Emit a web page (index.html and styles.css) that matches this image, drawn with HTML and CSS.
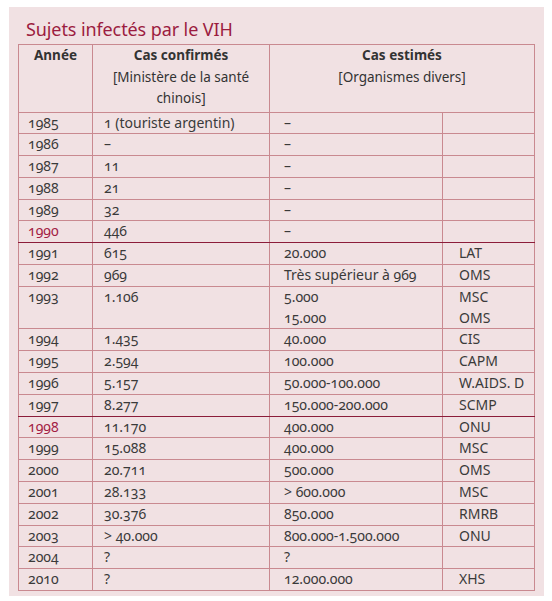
FILE: index.html
```html
<!DOCTYPE html>
<html lang="fr">
<head>
<meta charset="utf-8">
<title>Sujets infectés par le VIH</title>
<link rel="stylesheet" href="styles.css">
</head>
<body>
<div class="panel">
  <h1 class="title">Sujets infectés par le VIH</h1>
  <table class="data">
    <colgroup>
      <col class="c-year">
      <col class="c-conf">
      <col class="c-est">
      <col class="c-src">
    </colgroup>
    <thead>
      <tr>
        <th class="h-year">Année</th>
        <th class="h-conf">Cas confirmés<br><span class="sub">[Ministère de la santé<br>chinois]</span></th>
        <th class="h-est" colspan="2">Cas estimés<br><span class="sub">[Organismes divers]</span></th>
      </tr>
    </thead>
    <tbody>
      <tr><td class="year">1985</td><td class="conf">1 (touriste argentin)</td><td class="est">–</td><td class="src"></td></tr>
      <tr><td class="year">1986</td><td class="conf">–</td><td class="est">–</td><td class="src"></td></tr>
      <tr><td class="year">1987</td><td class="conf">11</td><td class="est">–</td><td class="src"></td></tr>
      <tr><td class="year">1988</td><td class="conf">21</td><td class="est">–</td><td class="src"></td></tr>
      <tr><td class="year">1989</td><td class="conf">32</td><td class="est">–</td><td class="src"></td></tr>
      <tr class="mark"><td class="year hl">1990</td><td class="conf">446</td><td class="est">–</td><td class="src"></td></tr>
      <tr><td class="year">1991</td><td class="conf">615</td><td class="est">20.000</td><td class="src">LAT</td></tr>
      <tr><td class="year">1992</td><td class="conf">969</td><td class="est">Très supérieur à 969</td><td class="src">OMS</td></tr>
      <tr><td class="year">1993</td><td class="conf">1.106</td><td class="est">5.000<br>15.000</td><td class="src">MSC<br>OMS</td></tr>
      <tr><td class="year">1994</td><td class="conf">1.435</td><td class="est">40.000</td><td class="src">CIS</td></tr>
      <tr><td class="year">1995</td><td class="conf">2.594</td><td class="est">100.000</td><td class="src">CAPM</td></tr>
      <tr><td class="year">1996</td><td class="conf">5.157</td><td class="est">50.000-100.000</td><td class="src">W.AIDS. D</td></tr>
      <tr class="mark"><td class="year">1997</td><td class="conf">8.277</td><td class="est">150.000-200.000</td><td class="src">SCMP</td></tr>
      <tr><td class="year hl">1998</td><td class="conf">11.170</td><td class="est">400.000</td><td class="src">ONU</td></tr>
      <tr><td class="year">1999</td><td class="conf">15.088</td><td class="est">400.000</td><td class="src">MSC</td></tr>
      <tr><td class="year">2000</td><td class="conf">20.711</td><td class="est">500.000</td><td class="src">OMS</td></tr>
      <tr><td class="year">2001</td><td class="conf">28.133</td><td class="est">&gt; 600.000</td><td class="src">MSC</td></tr>
      <tr><td class="year">2002</td><td class="conf">30.376</td><td class="est">850.000</td><td class="src">RMRB</td></tr>
      <tr><td class="year">2003</td><td class="conf">&gt; 40.000</td><td class="est">800.000-1.500.000</td><td class="src">ONU</td></tr>
      <tr><td class="year">2004</td><td class="conf">?</td><td class="est">?</td><td class="src"></td></tr>
      <tr><td class="year">2010</td><td class="conf">?</td><td class="est">12.000.000</td><td class="src">XHS</td></tr>
    </tbody>
  </table>
</div>
</body>
</html>
```

FILE: styles.css
```css
html, body {
  margin: 0;
  padding: 0;
  background: #ffffff;
}

body {
  font-family: "Noto Sans", "Open Sans", sans-serif;
  font-variant-numeric: oldstyle-nums;
  color: #3a3a3a;
}

.panel {
  margin: 7px 0 0 9px;
  width: 535px;
  height: 589px;
  box-sizing: border-box;
  padding: 10px 10px 5px 9px;
  background: #f1e1e3;
}

.title {
  margin: 0 0 3px 0;
  padding-left: 8px;
  font-size: 18px;
  line-height: 24px;
  font-weight: 400;
  letter-spacing: -0.1px;
  color: #9c1c40;
}

.data {
  border-collapse: collapse;
  table-layout: fixed;
  width: 516px;
  font-size: 14px;
}

.c-year { width: 74px; }
.c-conf { width: 177px; }
.c-est { width: 173px; }
.c-src { width: 92px; }

.data th,
.data td {
  border: 1px solid #c98990;
  padding: 0;
}

.data th {
  font-size: 13.5px;
  font-weight: 700;
  text-align: center;
  vertical-align: top;
  line-height: 21.5px;
  padding-bottom: 2px;
  color: #333333;
}

.data th .sub {
  font-weight: 400;
}

.data td {
  line-height: 20.8px;
  vertical-align: top;
  white-space: nowrap;
}

.year { padding-left: 9px !important; }
.conf { padding-left: 11px !important; }
.est { padding-left: 14px !important; }
.src { padding-left: 16px !important; }

.hl { color: #a31d45; }

.data tr.mark td {
  border-bottom: 1.5px solid #8c1c3a;
}
```
